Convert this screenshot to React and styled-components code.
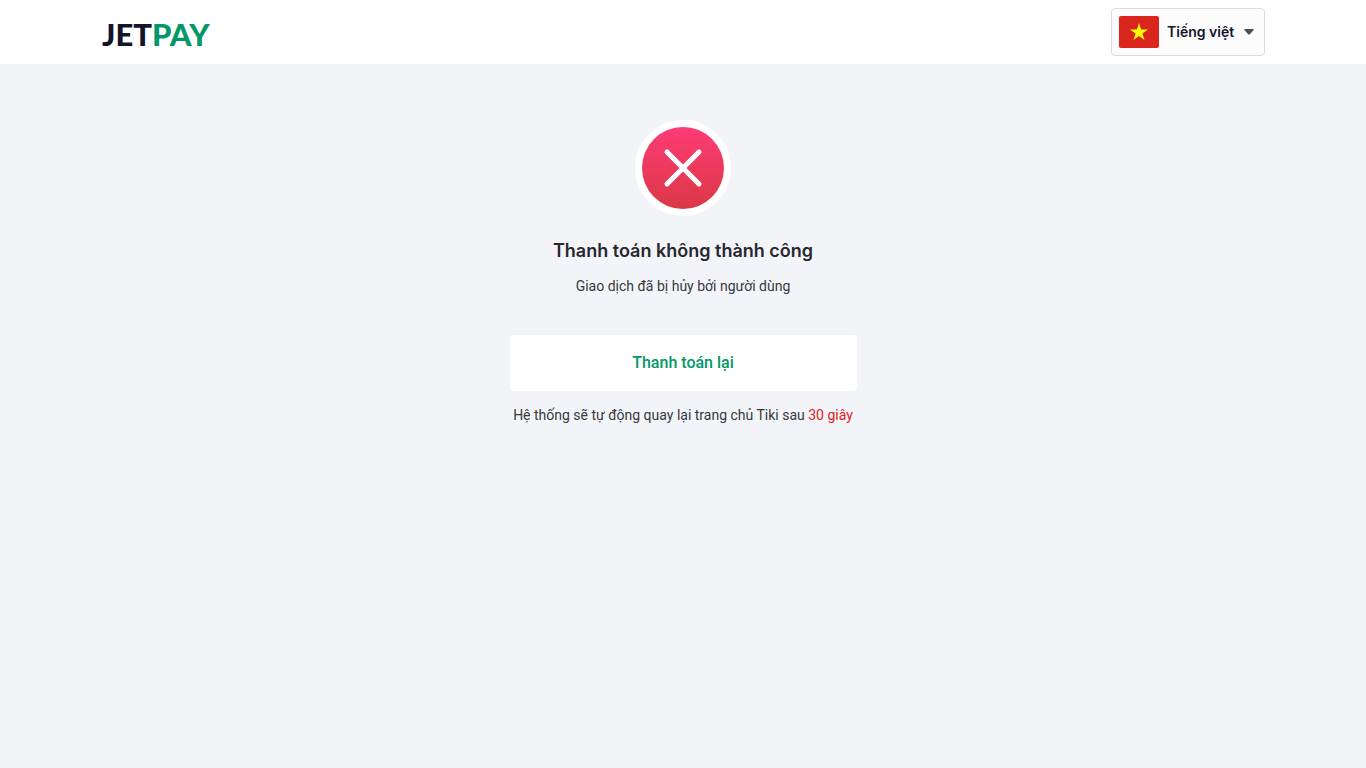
import React from "react";
import styled, { createGlobalStyle } from "styled-components";

const GlobalStyle = createGlobalStyle`
  *, *::before, *::after { box-sizing: border-box; }
  body {
    margin: 0;
    background: #f2f4f8;
    color: #27272f;
    font-family: Inter, "Noto Sans", sans-serif;
  }
`;

const Header = styled.header`
  background: #fff;
`;

const HeaderInner = styled.div`
  display: flex;
  align-items: center;
  justify-content: space-between;
  max-width: 1164px;
  height: 64px;
  margin: 0 auto;
`;

const Logo = styled.a`
  padding: 3px 0 0 1px;
  color: #14142b;
  font-family: Lato, sans-serif;
  font-size: 31px;
  font-weight: 900;
  line-height: 40px;
  text-decoration: none;
`;

const LogoAccent = styled.span`
  color: #039869;
`;

const LanguagePicker = styled.label`
  display: flex;
  align-items: center;
  gap: 8px;
  height: 48px;
  padding: 0 10px 0 7px;
  border: 1px solid #d9dbdf;
  border-radius: 4px;
  background: #fcfcfc;
`;

const LanguageSelect = styled.select`
  appearance: none;
  width: 69px;
  padding: 0;
  border: 0;
  background: transparent;
  color: #14142b;
  font-family: inherit;
  font-size: 14px;
  font-weight: 600;
  line-height: 24px;
`;

const Main = styled.main`
  display: flex;
  flex-direction: column;
  align-items: center;
  padding: 56px 16px;
  text-align: center;
`;

const Title = styled.h1`
  margin: 20px 0 0;
  font-size: 18px;
  font-weight: 600;
  line-height: 30px;
`;

const Text = styled.p`
  margin: 0;
  padding-top: ${(p) => p.$space}px;
  color: #38383d;
  font-family: Roboto, sans-serif;
  font-size: 14px;
  line-height: 20px;
`;

const Countdown = styled.span`
  color: #e02020;
`;

const RetryButton = styled.button`
  width: 100%;
  max-width: 347px;
  height: 56px;
  margin-top: 39px;
  padding: 0 0 2px;
  border: 0;
  border-radius: 4px;
  background: #fff;
  color: #039869;
  font-family: Roboto, sans-serif;
  font-size: 16px;
  font-weight: 500;
  cursor: pointer;
`;

function VietnamFlag() {
  return (
    <svg width="40" height="32" viewBox="0 0 40 32" aria-hidden="true">
      <rect width="40" height="32" rx="2" fill="#da251d" />
      <path fill="#ff0" d="M20 7l2.100 6.500h6.800l-5.500 4 2.100 6.500-5.500-4-5.500 4 2.100-6.500-5.500-4h6.800z" />
    </svg>
  );
}

function Caret() {
  return (
    <svg width="10" height="6" viewBox="0 0 10 6" aria-hidden="true">
      <path fill="#4e4b59" d="M1 0h8q1.400 0 .6 1L5.800 5.200q-.8.700-1.600 0L.4 1Q-.4 0 1 0z" />
    </svg>
  );
}

function FailedIcon() {
  return (
    <svg width="96" height="96" viewBox="0 0 96 96" role="img" aria-label="Thất bại">
      <defs>
        <linearGradient id="failed" x1="0" y1="0" x2="0" y2="1">
          <stop offset="0" stopColor="#fd3b74" />
          <stop offset="1" stopColor="#db3846" />
        </linearGradient>
      </defs>
      <circle cx="48" cy="48" r="48" fill="#fff" />
      <circle cx="48" cy="48" r="41" fill="url(#failed)" />
      <path d="M32 32l32 32M64 32L32 64" stroke="#fff" strokeWidth="5" strokeLinecap="round" />
    </svg>
  );
}

export default function App() {
  return (
    <>
      <GlobalStyle />
      <Header>
        <HeaderInner>
          <Logo href="#">
            JET<LogoAccent>PAY</LogoAccent>
          </Logo>
          <LanguagePicker>
            <VietnamFlag />
            <LanguageSelect aria-label="Ngôn ngữ" defaultValue="vi">
              <option value="vi">Tiếng việt</option>
              <option value="en">English</option>
            </LanguageSelect>
            <Caret />
          </LanguagePicker>
        </HeaderInner>
      </Header>
      <Main>
        <FailedIcon />
        <Title>Thanh toán không thành công</Title>
        <Text $space={10}>Giao dịch đã bị hủy bởi người dùng</Text>
        <RetryButton type="button">Thanh toán lại</RetryButton>
        <Text $space={14}>
          Hệ thống sẽ tự động quay lại trang chủ Tiki sau <Countdown>30 giây</Countdown>
        </Text>
      </Main>
    </>
  );
}
